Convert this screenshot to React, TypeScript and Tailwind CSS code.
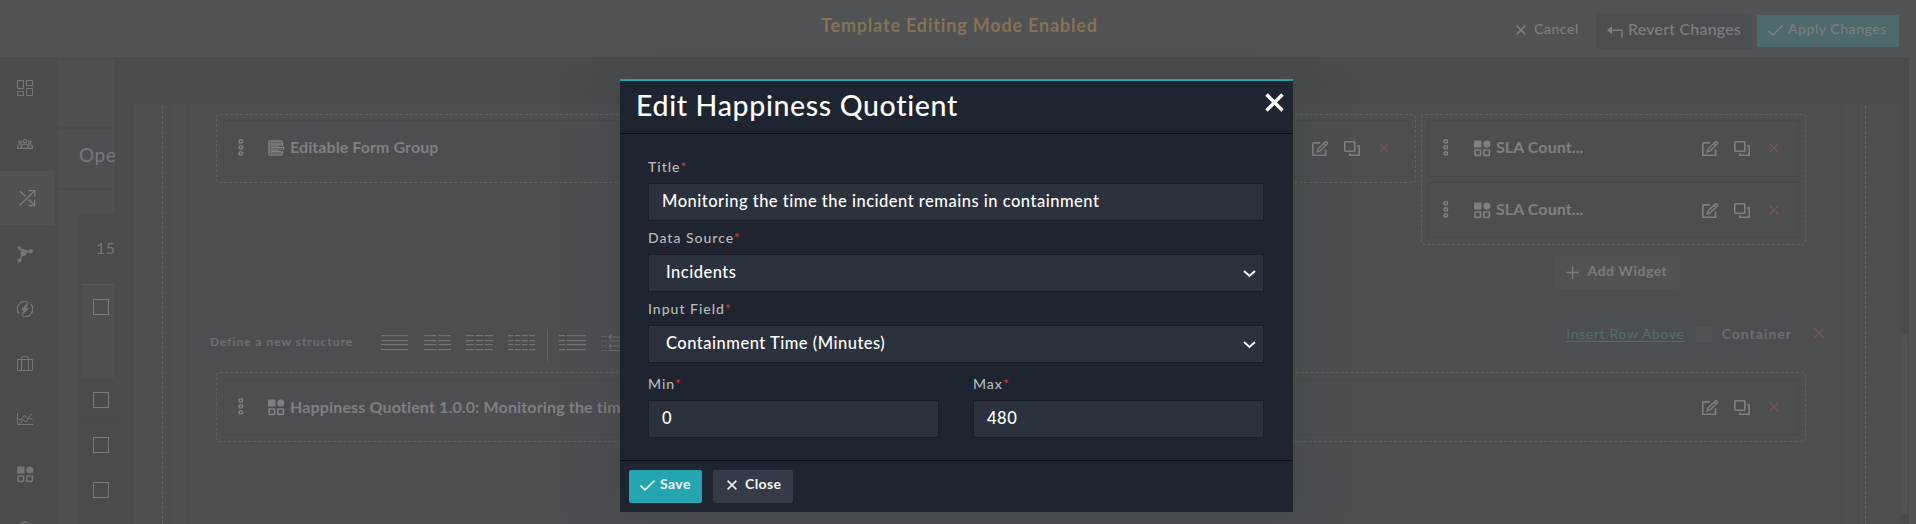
import React from "react";

type IconProps = { className?: string };

const WidgetIcon = ({ className = "" }: IconProps) => (
  <svg className={className} width="17" height="17" viewBox="0 0 17 17" fill="none">
    <rect x="0" y="0.5" width="7.5" height="7" rx="0.8" fill="currentColor" />
    <circle cx="12.8" cy="4" r="3.6" fill="currentColor" />
    <rect x="1" y="10" width="5.6" height="5.4" rx="0.6" stroke="currentColor" strokeWidth="1.6" />
    <rect x="9.8" y="10" width="5.6" height="5.4" rx="0.6" stroke="currentColor" strokeWidth="1.6" />
  </svg>
);

const FormIcon = () => (
  <svg width="17" height="17" viewBox="0 0 17 17" fill="none" stroke="currentColor">
    <path d="M14.3 6V2.4Q14.3 1 12.9 1H2.4Q1 1 1 2.4V13.6Q1 15 2.4 15H12.9Q14.3 15 14.3 13.6V11" strokeWidth="1.6" />
    <path d="M3.3 3.2H12.3V4.8H3.3zM3.3 7.3H15.8V9H3.3zM3.3 11.4H12.3V13H3.3z" strokeWidth="1.2" />
    <path d="M1.5 6H10M1.5 10.3H10" strokeWidth="0.9" />
  </svg>
);

const DotsIcon = () => (
  <svg width="6" height="17" viewBox="0 0 6 17" fill="none" stroke="#858687" strokeWidth="1.4">
    <rect x="1.1" y="0.9" width="3.4" height="3" rx="1" />
    <rect x="1.1" y="6.9" width="3.4" height="3" rx="1" />
    <rect x="1.1" y="12.9" width="3.4" height="3" rx="1" />
  </svg>
);

const EditIcon = () => (
  <svg width="17" height="16" viewBox="0 0 17 16" fill="none" stroke="currentColor">
    <path d="M8 1.9H1.8Q.8 1.9.8 2.9V14.2H13.6V8.6" strokeWidth="1.6" />
    <path d="M5.2 10.8L6.2 7.8L13.3.9Q14 .4 14.7 1L15.3 1.6Q15.8 2.3 15.2 3L8.1 9.8ZM12 2.4L13.8 4.2" strokeWidth="1.4" />
  </svg>
);

const CopyIcon = () => (
  <svg width="17" height="16" viewBox="0 0 17 16" fill="none" stroke="currentColor" strokeWidth="1.6">
    <rect x="0.8" y="0.8" width="10" height="9.4" rx="0.6" />
    <path d="M13 5H15.2V14.2H5.8V12.2" />
  </svg>
);

const CrossIcon = ({ className = "" }: IconProps) => (
  <svg className={className} width="10" height="10" viewBox="0 0 10 10" fill="none" stroke="currentColor" strokeWidth="1.1">
    <path d="M0.5 0.5L9.5 9.5M9.5 0.5L0.5 9.5" />
  </svg>
);

const BoldCrossIcon = ({ className = "" }: IconProps) => (
  <svg className={className} width="10" height="10" viewBox="0 0 10 10" fill="none" stroke="currentColor" strokeWidth="1.5">
    <path d="M0.6 0.6L9.4 9.4M9.4 0.6L0.6 9.4" />
  </svg>
);

const CheckIcon = () => (
  <svg width="15" height="11" viewBox="0 0 15 11" fill="none" stroke="currentColor" strokeWidth="1.6">
    <path d="M0.5 5.5L5 9.8L14.5 0.7" />
  </svg>
);

const sideIcons: React.ReactNode[] = [
  <svg key="a" width="16" height="16" viewBox="0 0 16 16" fill="none" stroke="currentColor">
    <path d="M.5.5H6.5V8.5H.5zM9.5.5H15.5V5.5H9.5zM.5 11.5H6.5V15.5H.5zM9.5 8.5H15.5V15.5H9.5z" />
  </svg>,
  <svg key="b" className="mt-[2px]" width="16" height="10" viewBox="0 0 16 10" fill="none" stroke="currentColor" strokeWidth="1.2">
    <circle cx="8" cy="2.2" r="1.7" /><circle cx="3.2" cy="3.2" r="1.3" /><circle cx="12.8" cy="3.2" r="1.3" />
    <path d="M4.5 9.4V7.5Q4.7 5 8 5Q11.3 5 11.5 7.5V9.4ZM4.5 9.4H.5V7.8Q.7 5.5 4.6 5.8M11.5 9.4H15.5V7.8Q15.3 5.5 11.4 5.8" />
  </svg>,
  <svg key="c" className="ml-[5px] mt-px" width="17" height="17" viewBox="0 0 17 17" fill="none" stroke="currentColor" strokeWidth="1.3">
    <path d="M.5 15.5L15.8.7M9.5.7H15.9V6.5M.8 1L6.3 6.3M9.6 9.5L15.4 15.2M15.6 10V15.6H9.5" />
  </svg>,
  <svg key="d" className="mt-px" width="16" height="17" viewBox="0 0 16 17" fill="currentColor" stroke="currentColor">
    <circle cx="6.5" cy="7" r="2.9" stroke="none" /><circle cx="2.3" cy="1.9" r="1.6" stroke="none" />
    <circle cx="13.7" cy="5.2" r="2.2" stroke="none" /><circle cx="2.4" cy="14.5" r="2.1" stroke="none" />
    <path d="M2.3 1.9L6.5 7L13.7 5.2M6.5 7L2.4 14.5" strokeWidth="1.3" />
  </svg>,
  <svg key="e" width="16" height="16" viewBox="0 0 16 16" fill="none" stroke="currentColor">
    <path d="M10.2.9A7.3 7.3 0 0 0 2.4 12.8M5.8 15.1A7.3 7.3 0 0 0 13.6 3.2" strokeWidth="1.3" />
    <path d="M11.8 1L4 9H7.2L4.2 15L12 7.2H8.8Z" fill="currentColor" strokeWidth="0.5" />
  </svg>,
  <svg key="f" width="16" height="15" viewBox="0 0 16 15" fill="none" stroke="currentColor">
    <path d="M.5 3.5H15.5V14.5H.5zM4.5 14V2Q4.5.6 6 .6H10Q11.5.6 11.5 2V14" />
  </svg>,
  <svg key="g" width="16" height="12" viewBox="0 0 16 12" fill="none" stroke="currentColor">
    <path d="M.5 0V11.5H16M3 10.8L5.5 6.5L9 9L12.5 5L15.5 6.5M2 6.5H4L7.5 2.2L10.5 5.5L15 .8" />
  </svg>,
  <WidgetIcon key="h" className="mt-px" />,
  <svg key="i" width="16" height="16" viewBox="0 0 16 16" fill="none" stroke="currentColor">
    <circle cx="8" cy="8" r="7.4" /><path d="M8 .5Q1 8 8 15.5Q15 8 8 .5M.5 8H15.5" />
  </svg>,
];

const Sidebar = () => (
  <nav className="flex h-[467px] w-[57px] shrink-0 flex-col overflow-hidden bg-[#4a4b4c] pt-[3px] text-[#74777a]">
    {sideIcons.map((icon, i) => (
      <div
        key={i}
        className={
          i === 2
            ? "my-px flex h-[54px] w-[55px] shrink-0 items-center bg-[#505152] pl-[14px] text-[#7b7d7f]"
            : "flex h-[55px] w-[55px] shrink-0 items-center pl-[17px]"
        }
      >
        {icon}
      </div>
    ))}
  </nav>
);

const CheckRow = ({ className }: { className: string }) => (
  <div className={className}>
    <span className="h-4 w-4 border border-[#7a7b7c]" />
  </div>
);

const ListPanel = () => (
  <div className="flex h-[467px] w-[58px] shrink-0 flex-col overflow-hidden bg-[#4e4f53] pt-px">
    <div className="h-[2px] shrink-0 bg-[#4a4b4d]" />
    <div className="h-[69px] shrink-0 border-b-2 border-[#4a4b4d]" />
    <div className="h-[61px] shrink-0 border-b-2 border-[#4a4b4d] pl-[22px] pt-[12px] text-[19px] leading-7 tracking-[0.5px] text-[#77787a]">Ope</div>
    <div className="ml-[22px] mt-[23px] flex grow flex-col rounded-tl-[2px] bg-[#4a4b4c] pl-[3px]">
      <div className="h-[71px] shrink-0 pl-[14px] pt-[23px] text-[16px] leading-6 tracking-[0.5px] text-[#747576]">15</div>
      <CheckRow className="flex h-[94px] shrink-0 border-t border-[#55575b] bg-[#4e4f53] pl-[11px] pt-[14px]" />
      <CheckRow className="flex h-[45px] shrink-0 border-b border-[#48494a] pl-[11px] pt-[14px]" />
      <CheckRow className="flex h-[45px] shrink-0 pl-[11px] pt-[14px]" />
      <CheckRow className="flex h-[45px] shrink-0 pl-[11px] pt-[14px]" />
    </div>
  </div>
);

type CardProps = { icon: React.ReactNode; label: string; className: string; iconClass?: string; labelClass?: string };

const WidgetCard = ({
  icon,
  label,
  className,
  iconClass = "ml-[24px]",
  labelClass = "pt-[14px] tracking-[0.08px]",
}: CardProps) => (
  <div className={`flex shrink-0 justify-between border border-[#48494c] pl-[14px] text-[#7f8081] ${className}`}>
    <div className="flex">
      <div className="pt-[18px]"><DotsIcon /></div>
      <div className={`pt-[19px] ${iconClass}`}>{icon}</div>
      <div className={`ml-[5px] whitespace-nowrap text-[16px] font-bold leading-6 ${labelClass}`}>{label}</div>
    </div>
    <div className="flex pr-[19px]">
      <div className="pt-[20px]"><EditIcon /></div>
      <div className="ml-[15px] pt-[20px]"><CopyIcon /></div>
      <div className="ml-[18px] pt-[22px] text-[#7d5455]"><CrossIcon /></div>
    </div>
  </div>
);

const LayoutIcon = ({ cols, className }: { cols: [number, number][]; className: string }) => (
  <svg className={className} width="27" height="17" viewBox="0 0 27 17" fill="#727375">
    {[0, 5, 9, 14].map((y) => cols.map(([x, w]) => <rect key={`${y}-${x}`} x={x} y={y} width={w} height="1.2" />))}
  </svg>
);

const Canvas = () => (
  <div className="flex h-[420px] overflow-hidden bg-[#4d4e52]">
    <div className="mt-[2px] w-[29px] shrink-0 border-r border-dashed border-[#626365]" />
    <div className="w-[7px] shrink-0 border-r border-[#494a4d]" />
    <div className="w-[18px] shrink-0 border-r border-[#494a4d]" />
    <div className="flex w-[1653px] shrink-0 flex-col pl-[28px] pt-[10px]">
      <div className="flex h-[185px] shrink-0 items-start">
        <div className="flex h-[69px] w-[1200px] shrink-0 flex-col rounded-[4px] border border-dashed border-[#5f6062] px-[6px] pt-[5px]">
          <WidgetCard className="h-[57px]" icon={<FormIcon />} label="Editable Form Group" />
        </div>
        <div className="ml-[5px] flex w-[385px] shrink-0 flex-col items-center">
          <div className="flex h-[131px] w-full flex-col gap-[5px] rounded-[4px] border border-dashed border-[#5f6062] px-[6px] pt-[5px]">
            <WidgetCard className="h-[57px]" iconClass="ml-[25px]" icon={<WidgetIcon />} label="SLA Count..." />
            <WidgetCard className="h-[56px]" iconClass="ml-[25px]" icon={<WidgetIcon />} label="SLA Count..." />
          </div>
          <div className="ml-[6px] mt-[11px] flex h-[33px] w-[126px] items-center rounded-[2px] bg-[#515254] pb-px pl-3 text-[#7a7b7c]">
            <svg width="13" height="13" viewBox="0 0 13 13" stroke="currentColor" strokeWidth="1.4"><path d="M6.5 0V13M0 6.5H13" /></svg>
            <span className="ml-[9px] whitespace-nowrap pb-[3px] text-[14px] font-bold tracking-[0.5px]">Add Widget</span>
          </div>
        </div>
      </div>
      <div className="-ml-[6px] flex h-[73px] w-[1620px] shrink-0 justify-between">
        <div className="flex items-start text-[12px] font-bold tracking-[0.96px] text-[#6e6f72]">
          <span className="w-[171px] whitespace-nowrap pt-[34px] leading-[18px]">Define a new structure</span>
          <LayoutIcon className="mt-[36px]" cols={[[0, 27]]} />
          <LayoutIcon className="ml-4 mt-[36px]" cols={[[0, 12.5], [14.5, 12.5]]} />
          <LayoutIcon className="ml-[15px] mt-[36px]" cols={[[0, 8], [9.5, 8], [19, 8]]} />
          <LayoutIcon className="ml-[15px] mt-[36px]" cols={[[0, 5.5], [7, 5.5], [14, 5.5], [21.5, 5.5]]} />
          <span className="ml-3 mt-[30px] h-8 w-px bg-[#626366]" />
          <LayoutIcon className="ml-[11px] mt-[36px]" cols={[[0, 6], [7.5, 19.5]]} />
          <svg className="ml-[15px] mt-[35px]" width="27" height="18" viewBox="0 0 27 18" stroke="#727375" fill="none" strokeWidth="1.2">
            <path d="M0 2.5H6M0 7H6M0 12H6M0 16.5H6" strokeOpacity="0.6" />
            <path d="M8 3H27M8 7H27M8 12H27M8 16.5H27M10.5.5L8 3L10.5 5.5M10.5 9.5L8 12L10.5 14.5" />
          </svg>
        </div>
        <div className="flex items-start pt-[23px] text-[14px]">
          <span className="whitespace-nowrap leading-6 tracking-[0.63px] text-[#4d6f70] underline underline-offset-2">Insert Row Above</span>
          <span className="ml-[11px] mt-[5px] h-4 w-4 bg-[#515254]" />
          <span className="ml-[10px] whitespace-nowrap font-bold leading-6 tracking-[1px] text-[#6e6f72]">Container</span>
          <CrossIcon className="ml-[22px] mt-[6px] text-[#7d5455]" />
          <span className="w-[6px]" />
        </div>
      </div>
      <div className="flex h-[70px] w-[1590px] shrink-0 flex-col rounded-[4px] border border-dashed border-[#5f6062] px-[6px] pt-[6px]">
        <WidgetCard
          className="h-[56px]"
          labelClass="pt-[15px] tracking-[0.15px]"
          icon={<WidgetIcon />}
          label="Happiness Quotient 1.0.0: Monitoring the time"
        />
      </div>
    </div>
    <div className="w-[18px] shrink-0 border-x border-[#494a4d]" />
    <div className="mt-[2px] w-[7px] shrink-0 border-r border-dashed border-[#626365]" />
    <div className="grow" />
    <div className="w-[9px] shrink-0 bg-[#4a4b4c] pl-px pt-[230px]">
      <div className="h-[180px] w-[7px] rounded-full bg-[#515254]" />
    </div>
  </div>
);

type FieldProps = { label: string; value: string; select?: boolean; className?: string };

const Field = ({ label, value, select, className = "" }: FieldProps) => (
  <div className={`flex flex-col ${className}`}>
    <label className="h-[26px] pt-px text-[14px] font-medium leading-[18px] tracking-[1px] text-[#b9babb]">
      {label}
      <span className="text-[#c9383f]">*</span>
    </label>
    <div
      className={`flex h-[38px] items-center justify-between border border-[#191d27] bg-[#2c313e] pb-px pr-[7px] text-[16.5px] font-medium tracking-[0.5px] text-white ${select ? "pl-[17px]" : "pl-[13px]"}`}
    >
      <span className="pb-px leading-6">{value}</span>
      {select && (
        <svg className="mt-[3px]" width="13" height="8" viewBox="0 0 13 8" fill="none" stroke="currentColor" strokeWidth="2">
          <path d="M1 1L6.5 6L12 1" />
        </svg>
      )}
    </div>
  </div>
);

const Modal = () => (
  <div className="absolute left-[620px] top-[79px] flex h-[433px] w-[673px] flex-col border-t-2 border-[#20a5af] bg-[#1e2430] shadow-[0_0_40px_rgba(60,62,63,0.5)]">
    <div className="flex h-[53px] shrink-0 justify-between border-b border-[#0b0e16] pl-[16px] pr-[9px]">
      <h1 className="whitespace-nowrap pt-[4px] text-[28.5px] font-medium leading-[40px] tracking-[0.65px] text-white">Edit Happiness Quotient</h1>
      <svg className="mt-[12px]" width="19" height="19" viewBox="0 0 19 19" stroke="white" strokeWidth="3.4">
        <path d="M1.5 1.5L17.5 17.5M17.5 1.5L1.5 17.5" />
      </svg>
    </div>
    <div className="flex h-[327px] shrink-0 flex-col border-b border-[#0b0e16] pl-[28px] pr-[29px] pt-[23px]">
      <Field className="h-[71px]" label="Title" value="Monitoring the time the incident remains in containment" />
      <Field className="h-[71px]" label="Data Source" value="Incidents" select />
      <Field className="h-[75px]" label="Input Field" value="Containment Time (Minutes)" select />
      <div className="flex justify-between">
        <Field className="w-[291px]" label="Min" value="0" />
        <Field className="w-[291px]" label="Max" value="480" />
      </div>
    </div>
    <div className="flex gap-[11px] pl-[9px] pt-[9px] text-[14px] font-bold tracking-[0.4px] text-[#f3f4f5]">
      <button className="flex h-[33px] w-[73px] items-center rounded-[2px] bg-[#24a6b0] pb-[3px] pl-[11px]">
        <CheckIcon />
        <span className="ml-[5px] pb-[4px]">Save</span>
      </button>
      <button className="flex h-[33px] w-[80px] items-center rounded-[2px] bg-[#343a48] pb-[3px] pl-[14px]">
        <BoldCrossIcon />
        <span className="ml-2 pb-[4px]">Close</span>
      </button>
    </div>
  </div>
);

export default function App() {
  return (
    <div className="relative h-[524px] w-[1916px] overflow-hidden bg-[#525354] font-['Lato',sans-serif]">
      <header className="flex h-[57px] items-start bg-[#525354]">
        <div className="w-[1505px] shrink-0 pl-[821px] pt-[13px] text-[18px] font-bold leading-6 tracking-[0.82px] text-[#88735a]">
          Template Editing Mode Enabled
        </div>
        <div className="flex text-[14px] tracking-[0.55px] text-[#7d7e7f]">
          <div className="flex h-[57px] w-[91px] items-center pl-[11px]">
            <BoldCrossIcon className="mt-[2px]" />
            <span className="ml-2 font-medium">Cancel</span>
          </div>
          <div className="mt-[13px] flex h-[36px] w-[156px] items-center rounded-[3px] bg-[#4d4e52] pl-[11px]">
            <svg className="mt-px" width="16" height="12" viewBox="0 0 16 12" fill="none" stroke="currentColor" strokeWidth="1.5">
              <path d="M2 4.2H15V11.5" /><path d="M5 0V8.4L0 4.2Z" fill="currentColor" stroke="none" />
            </svg>
            <span className="ml-[5px] whitespace-nowrap pb-[4px] text-[16px] font-medium tracking-[0.2px]">Revert Changes</span>
          </div>
          <div className="ml-[5px] mt-[15px] flex h-[32px] w-[142px] items-center rounded-[2px] bg-[#4e6a6c] pb-[2px] pl-[11px]">
            <CheckIcon />
            <span className="ml-[5px] whitespace-nowrap pb-[3px] font-medium">Apply Changes</span>
          </div>
        </div>
      </header>
      <div className="flex">
        <Sidebar />
        <ListPanel />
        <div className="flex w-[1794px] shrink-0 flex-col bg-[#4a4b4c] pl-[19px] pt-[47px]">
          <Canvas />
        </div>
      </div>
      <Modal />
    </div>
  );
}
